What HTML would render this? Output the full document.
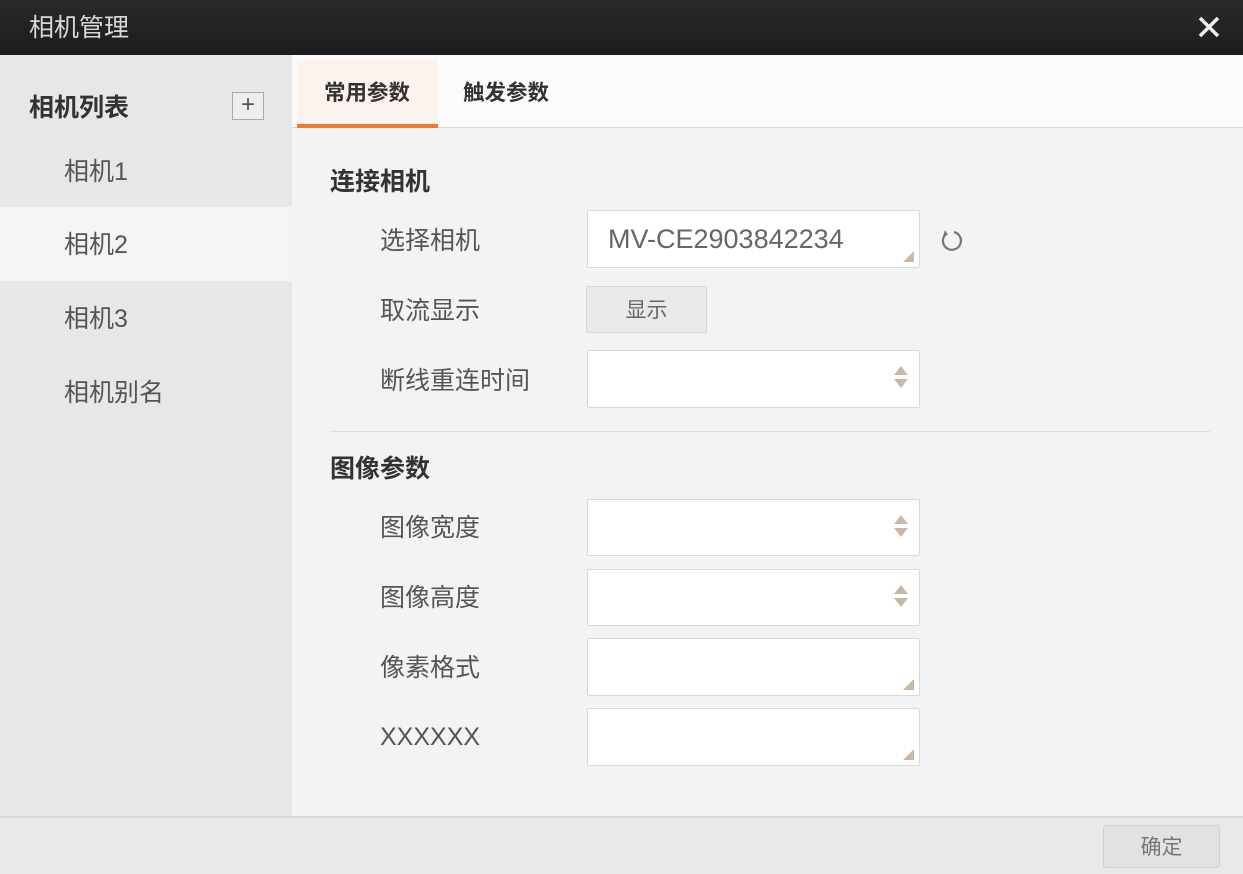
<!DOCTYPE html>
<html><head><meta charset="utf-8"><style>
*{margin:0;padding:0;box-sizing:border-box}
body{width:1243px;height:874px;position:relative;overflow:hidden;background:#f2f3f5;font-family:"Liberation Sans","Noto Sans CJK SC",sans-serif;color:#555}
.a{position:absolute;line-height:1.2}
.title{left:0;top:0;width:1243px;height:55px;background:linear-gradient(#2a2a2a,#1c1c1c)}
.side{left:0;top:55px;width:292px;height:761px;background:#e6e7e9}
.lbl{font-size:25px;color:#555}
.field{left:587px;width:333px;background:#fff;border:1px solid #d8d9db;border-radius:2px}
.tri{position:absolute;right:5px;bottom:5px;width:0;height:0;border-left:11px solid transparent;border-bottom:11px solid #c9b8a8}
.spin{position:absolute;right:11px;top:50%;margin-top:-13px}
.spin i{display:block;width:0;height:0;border-left:7px solid transparent;border-right:7px solid transparent}
.sec{font-size:25px;font-weight:bold;color:#333}
</style></head><body>
<div class="a title"></div>
<div class="a" style="left:29px;top:13px;font-size:25px;color:#d8d8d8">相机管理</div>
<svg class="a" style="left:1197px;top:15px" width="24" height="24"><path d="M3 3L21 21M21 3L3 21" stroke="#eee" stroke-width="3.5"/></svg>
<div class="a side"></div>
<div class="a" style="left:29px;top:93px;font-size:25px;font-weight:bold;color:#333">相机列表</div>
<div class="a" style="left:232px;top:92px;width:32px;height:28px;border:1px solid #aaa;background:#eee;text-align:center;line-height:24px;font-size:24px;color:#555">+</div>
<div class="a" style="left:0;top:207px;width:292px;height:74px;background:#f3f4f6"></div>
<div class="a lbl" style="left:64px;top:157px">相机1</div>
<div class="a lbl" style="left:64px;top:230px">相机2</div>
<div class="a lbl" style="left:64px;top:304px">相机3</div>
<div class="a lbl" style="left:64px;top:378px">相机别名</div>
<div class="a" style="left:292px;top:55px;width:951px;height:73px;background:#fbfbfb;border-bottom:1px solid #d8d8d8"></div>
<div class="a" style="left:297px;top:60px;width:141px;height:68px;background:#fdf3ee;border-bottom:4px solid #ee7a2e"></div>
<div class="a" style="left:324px;top:81px;font-size:21.5px;font-weight:bold;color:#333">常用参数</div>
<div class="a" style="left:463px;top:81px;font-size:21.5px;font-weight:bold;color:#333">触发参数</div>
<div class="a sec" style="left:330px;top:167px">连接相机</div>
<div class="a lbl" style="left:380px;top:226px">选择相机</div>
<div class="a field" style="top:210px;height:58px"><span style="position:absolute;left:20px;top:12px;font-size:27px;color:#666;line-height:1.2">MV-CE2903842234</span><i class="tri"></i></div>
<svg class="a" style="left:937px;top:227px" width="28" height="28" viewBox="0 0 28 28"><path d="M9 7A9 9 0 1 0 17 5" fill="none" stroke="#777" stroke-width="2.2"/><path d="M8 3L11 8L6 9Z" fill="#777"/></svg>
<div class="a lbl" style="left:380px;top:296px">取流显示</div>
<div class="a" style="left:586px;top:286px;width:121px;height:47px;background:#e8e9eb;border:1px solid #d6d7d9;border-radius:2px;text-align:center;line-height:47px;font-size:21px;color:#666">显示</div>
<div class="a lbl" style="left:380px;top:366px">断线重连时间</div>
<div class="a field" style="top:350px;height:58px"><div class="spin"><i style="border-bottom:9px solid #c9b8a8"></i><i style="margin-top:4px;border-top:9px solid #c9b8a8"></i></div></div>
<div class="a" style="left:330px;top:431px;width:880px;height:1px;background:#dcdddf"></div>
<div class="a sec" style="left:330px;top:454px">图像参数</div>
<div class="a lbl" style="left:380px;top:513px">图像宽度</div>
<div class="a field" style="top:499px;height:57px"><div class="spin"><i style="border-bottom:9px solid #c9b8a8"></i><i style="margin-top:4px;border-top:9px solid #c9b8a8"></i></div></div>
<div class="a lbl" style="left:380px;top:583px">图像高度</div>
<div class="a field" style="top:569px;height:57px"><div class="spin"><i style="border-bottom:9px solid #c9b8a8"></i><i style="margin-top:4px;border-top:9px solid #c9b8a8"></i></div></div>
<div class="a lbl" style="left:380px;top:653px">像素格式</div>
<div class="a field" style="top:638px;height:58px"><i class="tri"></i></div>
<div class="a lbl" style="left:380px;top:722px">XXXXXX</div>
<div class="a field" style="top:708px;height:58px"><i class="tri"></i></div>
<div class="a" style="left:0;top:816px;width:1243px;height:58px;background:#e8e9eb;border-top:2px solid #d6d7d9"></div>
<div class="a" style="left:1103px;top:825px;width:117px;height:43px;background:#e1e2e4;border:1px solid #cfd0d2;border-radius:3px;text-align:center;line-height:43px;font-size:21px;color:#777">确定</div>
</body></html>
